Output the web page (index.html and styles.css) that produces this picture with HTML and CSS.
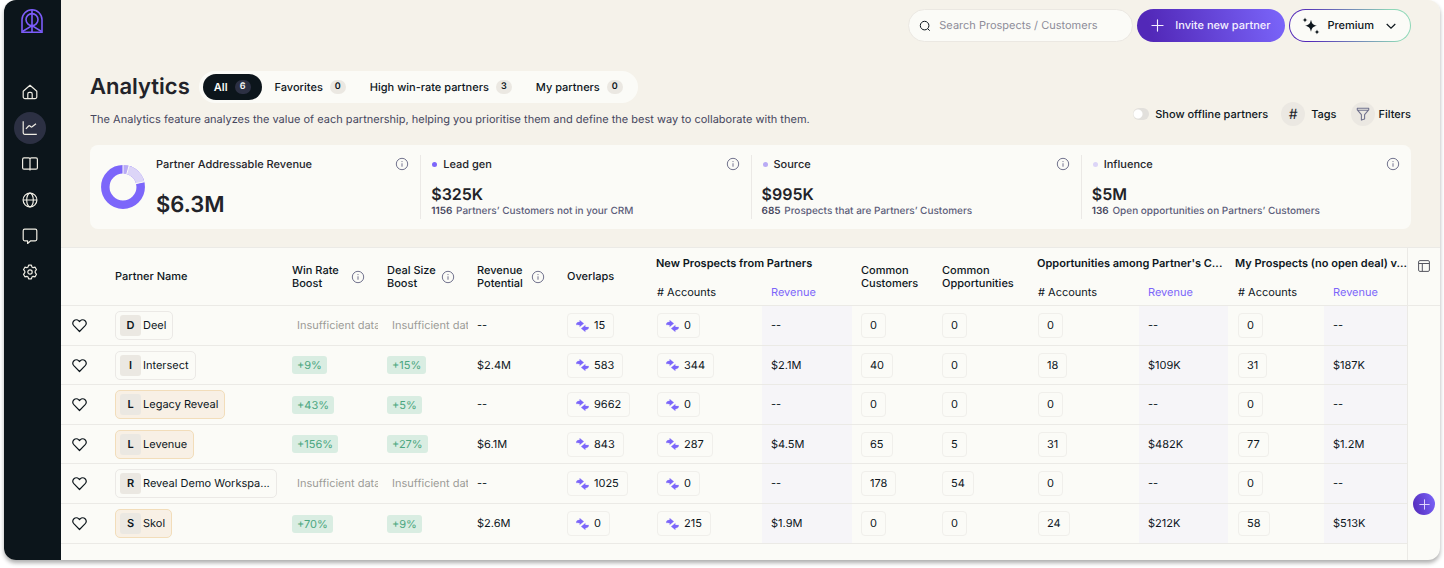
FILE: index.html
```html
<!DOCTYPE html>
<html lang="en">
<head>
<meta charset="utf-8">
<meta name="viewport" content="width=device-width, initial-scale=1">
<title>Analytics</title>
<link rel="stylesheet" href="styles.css">
</head>
<body>
<svg class="sprite" aria-hidden="true">
  <symbol id="i-info" viewBox="0 0 14 14"><circle cx="7" cy="7" r="5.7" fill="none" stroke="currentColor"/><path d="M7 6.3v3.4M7 4.1v1" stroke="currentColor" fill="none"/></symbol>
  <symbol id="i-heart" viewBox="0 0 14 14"><path d="M7 12.600 1.900 7.400C.6 6 .5 3.900 1.800 2.600 3.100 1.300 5.100 1.300 6.300 2.600L7 3.300l.7-.7c1.200-1.300 3.200-1.300 4.500 0 1.300 1.300 1.200 3.400-.1 4.800z" fill="none" stroke="currentColor" stroke-width="1.100" stroke-linejoin="round"/></symbol>
  <symbol id="i-swap" viewBox="0 0 14 12"><path d="M.3 4.800C.2 2.800 1.500 1.800 3.200 1.800H4V-.2L8.400 3.300 4 6.800V4.800H3C1.600 4.800.9 4.500.3 4.800zM13.700 7.200c.1 2-1.200 3-2.900 3H10v2L5.600 8.700 10 5.200v2H11c1.400 0 2.100.3 2.700 0z" fill="currentColor" stroke="currentColor" stroke-width=".3"/></symbol>
  <symbol id="i-plus" viewBox="0 0 14 14"><path d="M7 1v12M1 7h12" fill="none" stroke="currentColor" stroke-width="1.200" stroke-linecap="round"/></symbol>
</svg>
<div class="app">
  <aside class="sidebar">
    <a class="logo" href="#" aria-label="Home page">
      <svg width="22" height="24" viewBox="0 0 22 24" fill="none" stroke="currentColor" stroke-width="1.600"><path d="M1 23.200V10.800a10 10 0 0 1 20 0v12.400z"/><circle cx="11" cy="10.600" r="6"/><path d="M11 1v22M1.500 22.500 11 16.600l9.500 5.900"/></svg>
    </a>
    <nav class="nav" aria-label="Main">
      <a class="nav-item" href="#" aria-label="Home"><svg viewBox="0 0 16 16"><path d="M1.200 7.200 8 1.300l6.800 5.900v5.600a1.800 1.800 0 0 1-1.800 1.800H3a1.800 1.800 0 0 1-1.800-1.800zM5.800 14.400V9.900c0-.9.600-1.500 1.500-1.500h1.400c.9 0 1.500.6 1.500 1.500v4.500"/></svg></a>
      <a class="nav-item active" href="#" aria-label="Analytics"><svg viewBox="0 0 16 16"><path d="M1.200 1.200v11.600c0 .9.600 1.500 1.500 1.500h12.100M3.900 8.800 6.600 6c.5-.5.9-.5 1.400 0l.7.700c.5.500.9.500 1.400.1l3.900-3.100"/></svg></a>
      <a class="nav-item" href="#" aria-label="Library"><svg viewBox="0 0 16 16"><path d="M8 2.500v12M8 13.200H2A1.500 1.500 0 0 1 .6 11.700V3.400C.6 2.500 1.200 1.900 2 1.900h4.600c.8 0 1.400.5 1.400 1.200 0-.7.600-1.200 1.400-1.200H14c.8 0 1.400.6 1.400 1.500v8.300c0 .9-.6 1.500-1.400 1.500z"/></svg></a>
      <a class="nav-item" href="#" aria-label="Network"><svg viewBox="0 0 16 16"><circle cx="8" cy="8" r="6.900"/><ellipse cx="8" cy="8" rx="3.300" ry="6.900"/><path d="M1.100 8h13.800"/></svg></a>
      <a class="nav-item" href="#" aria-label="Messages"><svg viewBox="0 0 16 16"><path d="M2.700 1.200h10.600c.9 0 1.500.6 1.500 1.500v8.600c0 .9-.6 1.500-1.500 1.500H8.700l-3.100 2.700v-2.700H2.700c-.9 0-1.500-.6-1.500-1.500V2.700c0-.9.600-1.500 1.500-1.500z"/></svg></a>
      <a class="nav-item" href="#" aria-label="Settings"><svg viewBox="0 0 16 16"><path d="m6.600 1.100-.5 1.800-1.300.8-1.900-.5-1.400 2.500 1.300 1.400v1.600L1.500 10.300l1.400 2.500 1.900-.5 1.300.8.500 1.800h2.800l.5-1.800 1.300-.8 1.900.5 1.400-2.500-1.300-1.600V7.100l1.300-1.400-1.400-2.500-1.900.5-1.300-.8-.5-1.800z" stroke-linejoin="round"/><circle cx="8" cy="8" r="2.200"/></svg></a>
    </nav>
  </aside>

  <div class="page">
    <header class="hero">
      <div class="topbar">
        <label class="search">
          <svg width="12" height="12" viewBox="0 0 12 12" fill="none" stroke="currentColor"><circle cx="5.600" cy="5.600" r="4.300"/><path d="m8.700 8.700 2 2"/></svg>
          <input type="search" placeholder="Search Prospects / Customers" aria-label="Search Prospects / Customers">
        </label>
        <button class="invite" type="button"><svg width="13" height="13"><use href="#i-plus"/></svg>Invite new partner</button>
        <button class="premium" type="button">
          <svg width="18" height="18" viewBox="0 0 18 18" fill="currentColor"><path d="M9 2.800c.9 4 2 5.100 6 6-4 .9-5.100 2-6 6-.9-4-2-5.100-6-6 4-.9 5.100-2 6-6zM3 .4c.4 1.700.9 2.200 2.600 2.600C3.900 3.400 3.400 3.900 3 5.600 2.600 3.900 2.100 3.400.4 3 2.100 2.600 2.600 2.100 3 .4zM15 12.400c.4 1.700.9 2.200 2.600 2.600-1.700.4-2.200.9-2.600 2.600-.4-1.700-.9-2.200-2.600-2.600 1.700-.4 2.200-.9 2.600-2.600z"/></svg>
          Premium
          <svg class="chev" width="10" height="10" viewBox="0 0 10 10" fill="none" stroke="currentColor" stroke-width="1.200"><path d="M.7 3 5 7.200 9.300 3"/></svg>
        </button>
      </div>

      <div class="heading">
        <div class="heading-main">
          <div class="title-row">
            <h1>Analytics</h1>
            <div class="tabs">
              <button class="tab selected" type="button">All <span class="count">6</span></button>
              <button class="tab" type="button">Favorites <span class="count">0</span></button>
              <button class="tab" type="button">High win-rate partners <span class="count">3</span></button>
              <button class="tab" type="button">My partners <span class="count">0</span></button>
            </div>
          </div>
          <p class="lead">The Analytics feature analyzes the value of each partnership, helping you prioritise them and define the best way to collaborate with them.</p>
        </div>
        <div class="tools">
          <label class="switch"><input type="checkbox">Show offline partners</label>
          <button class="tool tool-tags" type="button"><span class="round">#</span>Tags</button>
          <button class="tool" type="button"><span class="round"><svg width="14" height="14" viewBox="0 0 14 14" fill="none" stroke="currentColor" stroke-width="1.100" stroke-linejoin="round"><path d="M1.300 1.300h11.400v1.600L8.600 7.700v4.400l-3.200 1V7.700L1.300 2.900zM1.700 3.300h10.600"/></svg></span>Filters</button>
        </div>
      </div>

      <section class="stats">
        <div class="stat total">
          <svg class="donut" width="44" height="44" viewBox="0 0 44 44" fill="none" stroke-width="8.500"><circle cx="22" cy="22" r="17.700" stroke="#7c66fa"/><path d="M22 4.300A17.700 17.700 0 0 1 39.300 17.800" stroke="#dcd5f7"/><path d="M22 4.300a17.700 17.700 0 0 1 5 .7" stroke="#b9abf5"/><path d="M22 0v9M28.300 0l-2.500 9M34.500 18.700l9.300-2" stroke="#fbfbf7" stroke-width="1"/></svg>
          <div class="stat-body">
            <div class="stat-head"><span>Partner Addressable Revenue</span><svg class="info"><use href="#i-info"/></svg></div>
            <div class="big">$6.3M</div>
          </div>
        </div>
        <div class="stat">
          <div class="stat-body">
            <div class="stat-head"><span class="dot dot-1"></span><span>Lead gen</span><svg class="info"><use href="#i-info"/></svg></div>
            <div class="value">$325K</div>
            <div class="note"><b>1156</b> Partners’ Customers not in your CRM</div>
          </div>
        </div>
        <div class="stat">
          <div class="stat-body">
            <div class="stat-head"><span class="dot dot-2"></span><span>Source</span><svg class="info"><use href="#i-info"/></svg></div>
            <div class="value">$995K</div>
            <div class="note"><b>685</b> Prospects that are Partners’ Customers</div>
          </div>
        </div>
        <div class="stat">
          <div class="stat-body">
            <div class="stat-head"><span class="dot dot-3"></span><span>Influence</span><svg class="info"><use href="#i-info"/></svg></div>
            <div class="value">$5M</div>
            <div class="note"><b>136</b> Open opportunities on Partners’ Customers</div>
          </div>
        </div>
      </section>
    </header>

    <main class="board">
      <div class="table-wrap">
        <table class="grid">
          <colgroup>
            <col class="c-heart"><col class="c-name"><col class="c-win"><col class="c-90"><col class="c-90"><col class="c-over">
            <col class="c-acc1"><col class="c-90"><col class="c-cust"><col class="c-opp"><col class="c-acc2"><col class="c-rev2"><col class="c-acc3"><col class="c-rev3">
          </colgroup>
          <thead>
            <tr>
              <th rowspan="2" aria-label="Favorite"></th>
              <th rowspan="2" class="name-cell">Partner Name</th>
              <th rowspan="2"><div class="th-info"><span>Win Rate<br>Boost</span><svg class="info"><use href="#i-info"/></svg></div></th>
              <th rowspan="2"><div class="th-info"><span>Deal Size<br>Boost</span><svg class="info"><use href="#i-info"/></svg></div></th>
              <th rowspan="2"><div class="th-info"><span>Revenue<br>Potential</span><svg class="info"><use href="#i-info"/></svg></div></th>
              <th rowspan="2">Overlaps</th>
              <th colspan="2" class="group">New Prospects from Partners</th>
              <th rowspan="2">Common<br>Customers</th>
              <th rowspan="2">Common<br>Opportunities</th>
              <th colspan="2" class="group">Opportunities among Partner's C...</th>
              <th colspan="2" class="group last">My Prospects (no open deal) v...</th>
            </tr>
            <tr>
              <th class="sub acc"># Accounts</th><th class="sub rev-head">Revenue</th>
              <th class="sub acc"># Accounts</th><th class="sub rev-head">Revenue</th>
              <th class="sub acc"># Accounts</th><th class="sub rev-head">Revenue</th>
            </tr>
          </thead>
          <tbody>
            <tr>
              <td class="fav"><button type="button" aria-label="Favorite Deel"><svg><use href="#i-heart"/></svg></button></td>
              <td class="name-cell"><a class="partner" href="#"><i>D</i>Deel</a></td>
              <td><span class="none">Insufficient data</span></td><td><span class="none">Insufficient data</span></td><td>--</td>
              <td><button class="box" type="button"><svg><use href="#i-swap"/></svg>15</button></td>
              <td class="acc"><button class="box" type="button"><svg><use href="#i-swap"/></svg>0</button></td><td class="rev">--</td>
              <td><button class="box" type="button">0</button></td><td><button class="box" type="button">0</button></td>
              <td class="acc"><button class="box" type="button">0</button></td><td class="rev">--</td>
              <td class="acc"><button class="box" type="button">0</button></td><td class="rev">--</td>
            </tr>
            <tr>
              <td class="fav"><button type="button" aria-label="Favorite Intersect"><svg><use href="#i-heart"/></svg></button></td>
              <td class="name-cell"><a class="partner" href="#"><i>I</i>Intersect</a></td>
              <td><span class="chip">+9%</span></td><td><span class="chip">+15%</span></td><td>$2.4M</td>
              <td><button class="box" type="button"><svg><use href="#i-swap"/></svg>583</button></td>
              <td class="acc"><button class="box" type="button"><svg><use href="#i-swap"/></svg>344</button></td><td class="rev">$2.1M</td>
              <td><button class="box" type="button">40</button></td><td><button class="box" type="button">0</button></td>
              <td class="acc"><button class="box" type="button">18</button></td><td class="rev">$109K</td>
              <td class="acc"><button class="box" type="button">31</button></td><td class="rev">$187K</td>
            </tr>
            <tr>
              <td class="fav"><button type="button" aria-label="Favorite Legacy Reveal"><svg><use href="#i-heart"/></svg></button></td>
              <td class="name-cell"><a class="partner warm" href="#"><i>L</i>Legacy Reveal</a></td>
              <td><span class="chip">+43%</span></td><td><span class="chip">+5%</span></td><td>--</td>
              <td><button class="box" type="button"><svg><use href="#i-swap"/></svg>9662</button></td>
              <td class="acc"><button class="box" type="button"><svg><use href="#i-swap"/></svg>0</button></td><td class="rev">--</td>
              <td><button class="box" type="button">0</button></td><td><button class="box" type="button">0</button></td>
              <td class="acc"><button class="box" type="button">0</button></td><td class="rev">--</td>
              <td class="acc"><button class="box" type="button">0</button></td><td class="rev">--</td>
            </tr>
            <tr>
              <td class="fav"><button type="button" aria-label="Favorite Levenue"><svg><use href="#i-heart"/></svg></button></td>
              <td class="name-cell"><a class="partner warm" href="#"><i>L</i>Levenue</a></td>
              <td><span class="chip">+156%</span></td><td><span class="chip">+27%</span></td><td>$6.1M</td>
              <td><button class="box" type="button"><svg><use href="#i-swap"/></svg>843</button></td>
              <td class="acc"><button class="box" type="button"><svg><use href="#i-swap"/></svg>287</button></td><td class="rev">$4.5M</td>
              <td><button class="box" type="button">65</button></td><td><button class="box" type="button">5</button></td>
              <td class="acc"><button class="box" type="button">31</button></td><td class="rev">$482K</td>
              <td class="acc"><button class="box" type="button">77</button></td><td class="rev">$1.2M</td>
            </tr>
            <tr>
              <td class="fav"><button type="button" aria-label="Favorite Reveal Demo Workspace"><svg><use href="#i-heart"/></svg></button></td>
              <td class="name-cell"><a class="partner" href="#"><i>R</i>Reveal Demo Workspa...</a></td>
              <td><span class="none">Insufficient data</span></td><td><span class="none">Insufficient data</span></td><td>--</td>
              <td><button class="box" type="button"><svg><use href="#i-swap"/></svg>1025</button></td>
              <td class="acc"><button class="box" type="button"><svg><use href="#i-swap"/></svg>0</button></td><td class="rev">--</td>
              <td><button class="box" type="button">178</button></td><td><button class="box" type="button">54</button></td>
              <td class="acc"><button class="box" type="button">0</button></td><td class="rev">--</td>
              <td class="acc"><button class="box" type="button">0</button></td><td class="rev">--</td>
            </tr>
            <tr>
              <td class="fav"><button type="button" aria-label="Favorite Skol"><svg><use href="#i-heart"/></svg></button></td>
              <td class="name-cell"><a class="partner warm" href="#"><i>S</i>Skol</a></td>
              <td><span class="chip">+70%</span></td><td><span class="chip">+9%</span></td><td>$2.6M</td>
              <td><button class="box" type="button"><svg><use href="#i-swap"/></svg>0</button></td>
              <td class="acc"><button class="box" type="button"><svg><use href="#i-swap"/></svg>215</button></td><td class="rev">$1.9M</td>
              <td><button class="box" type="button">0</button></td><td><button class="box" type="button">0</button></td>
              <td class="acc"><button class="box" type="button">24</button></td><td class="rev">$212K</td>
              <td class="acc"><button class="box" type="button">58</button></td><td class="rev">$513K</td>
            </tr>
          </tbody>
        </table>
      </div>
      <div class="rail">
        <div class="rail-head"><button class="columns" type="button" aria-label="Edit columns"><svg width="12" height="12" viewBox="0 0 12 12" fill="none" stroke="currentColor"><rect x=".6" y=".6" width="10.800" height="10.800" rx="1.300"/><path d="M.6 3.500h10.800M4.300 3.500v7.900"/></svg></button></div>
        <button class="add" type="button" aria-label="Add"><svg width="11" height="11"><use href="#i-plus" width="11" height="11"/></svg></button>
      </div>
    </main>
  </div>
</div>
</body>
</html>
```
FILE: styles.css
```css
* { box-sizing: border-box; }
body {
  margin: 0;
  background: #fff;
  color: #0d161c;
  font: 400 11px/13px Inter, "Liberation Sans", sans-serif;
  text-rendering: geometricPrecision;
}
button, input { font: inherit; color: inherit; margin: 0; text-rendering: inherit; }
button { border: 0; padding: 0; background: none; cursor: pointer; white-space: nowrap; }
a { color: inherit; text-decoration: none; }
svg { display: block; flex: none; }
.sprite { position: absolute; width: 0; height: 0; }

.app {
  display: flex;
  min-height: calc(100vh - 8px);
  margin: 0 4px 8px;
  border-radius: 12px;
  overflow: hidden;
  background: #fbfbf7;
  box-shadow: 0 3px 4px rgba(0, 0, 0, .32);
}

.sidebar { flex: none; width: 57px; background: #0c151b; }
.logo { display: block; padding: 9px 0 0 17px; color: #7c5cfa; }
.nav { display: flex; flex-direction: column; gap: 4px; padding: 43px 0 0 10px; }
.nav-item {
  display: grid;
  place-items: center;
  width: 32px;
  height: 32px;
  border-radius: 50%;
  color: #f0ede4;
}
.nav-item svg { width: 16px; height: 16px; fill: none; stroke: currentColor; stroke-width: 1.2; stroke-linejoin: round; }
.nav-item.active { background: #2c3043; }

.page { flex: 1; min-width: 0; display: flex; flex-direction: column; }
.hero { background: #f5f2ea; padding: 9px 29px 18px; border-bottom: 1px solid #ebeae6; }

.topbar { display: flex; justify-content: flex-end; gap: 4px; }
.topbar > * { height: 33px; border-radius: 17px; display: flex; align-items: center; }
.search { width: 225px; padding: 0 10px; gap: 8px; background: #fbfbf7; border: 1px solid #ebe8e2; }
.search input { flex: 1; min-width: 0; border: 0; padding: 0; background: none; outline: 0; }
.search input::placeholder { color: #8d8c99; opacity: 1; }
.invite {
  gap: 11px;
  padding: 0 14px;
  color: #f5f0ff;
  font-weight: 500;
  background: linear-gradient(75deg, #5228b8 10%, #7b66fb);
}
.premium {
  gap: 8px;
  padding: 0 14px 0 12px;
  font-weight: 500;
  border: 1px solid transparent;
  background: linear-gradient(#fbfbf7, #fbfbf7) padding-box, linear-gradient(75deg, #5228b8 15%, #8ed8b8 85%) border-box;
}
.chev { margin-left: 4px; }

.heading { display: flex; justify-content: space-between; align-items: flex-end; padding-top: 29px; }
.title-row { display: flex; align-items: center; gap: 9px; }
h1 { margin: 0; font-size: 22px; line-height: 28px; font-weight: 600; color: #222329; }
.tabs { display: flex; gap: 2px; padding: 3px 4px; border-radius: 16px; background: #fbfbf7; }
.tab { display: flex; align-items: center; gap: 7px; height: 26px; padding: 0 11px; border-radius: 13px; font-weight: 500; }
.count { min-width: 16px; height: 14px; padding: 0 5px; border-radius: 7px; background: #ebe8e2; font-size: 9px; line-height: 14px; font-weight: 600; }
.selected { color: #fbfbf7; background: #0c151b; font-weight: 600; }
.selected .count { background: #2c3043; }
.lead { margin: 9px 0 0; color: #45465d; line-height: 14px; }

.tools { display: flex; align-items: center; font-weight: 500; }
.switch { display: flex; align-items: center; gap: 6px; margin-right: 13px; }
.switch input {
  appearance: none;
  width: 16px;
  height: 12px;
  border-radius: 6px;
  background: radial-gradient(circle at 5px 6px, #fff 4px, transparent 5px), #e2e0dc;
}
.tool { display: flex; align-items: center; gap: 4px; font-weight: 500; }
.tool-tags { gap: 6px; margin-right: 14px; }
.round { display: grid; place-items: center; width: 24px; height: 24px; border-radius: 50%; background: #ebe8e2; font-size: 14px; font-weight: 400; color: #222329; }
.round svg { color: #72738e; }

.stats { display: grid; grid-template-columns: repeat(4, 1fr); margin-top: 19px; padding: 10px 0; border-radius: 8px; background: #fbfbf7; }
.stat { display: flex; min-width: 0; height: 64px; padding: 2px 11px 0 10px; border-left: 1px solid #ebe9e6; }
.stat.total { border-left-color: transparent; gap: 11px; }
.donut { margin-top: 8px; }
.stat-body { flex: 1; min-width: 0; }
.stat-head { display: flex; align-items: center; font-weight: 500; color: #222329; }
.stat-head .info { margin-left: auto; }
.info { width: 14px; height: 14px; color: #72738e; }
.dot { width: 5px; height: 5px; margin: 0 6px 0 1px; border-radius: 50%; }
.dot-1 { background: #7c66fa; }
.dot-2 { background: #b9abf5; }
.dot-3 { background: #dcd5f7; }
.big { margin-top: 20px; font-size: 22px; line-height: 28px; font-weight: 600; color: #222329; }
.value { margin-top: 12px; font-size: 16px; line-height: 22px; font-weight: 600; color: #222329; }
.note { color: #5c5d7a; font-size: 10px; font-weight: 500; white-space: nowrap; }
.note b { font-weight: 600; color: #45465d; margin-right: 1px; }

.board { flex: 1; display: flex; }
.table-wrap { flex: 1; min-width: 0; }
.grid { width: 100%; table-layout: fixed; border-collapse: separate; border-spacing: 0; }
.c-heart { width: 45px; }
.c-name { width: 177px; }
.c-win { width: 95px; }
.c-90 { width: 90px; }
.c-over { width: 89px; }
.c-acc1 { width: 115px; }
.c-cust { width: 81px; }
.c-opp { width: 95px; }
.c-acc2 { width: 111px; }
.c-rev2 { width: 89px; }
.c-acc3 { width: 96px; }
.c-rev3 { width: 83px; }
.grid th, .grid td { padding: 0 0 0 9px; text-align: left; vertical-align: middle; white-space: nowrap; overflow: hidden; border-bottom: 1px solid #ebeae6; }
.grid th { height: 29px; font-weight: 500; }
.grid th.group { font-weight: 600; padding-top: 1px; border-bottom: 0; }
.grid th.last { padding-left: 7px; }
.grid th.sub { font-weight: 400; padding-top: 2px; }
.grid th.rev-head { color: #7c66fa; }
.grid .acc { padding-left: 10px; }
.grid .fav { padding-left: 11px; }
.grid tbody td { height: 40px; }
.grid tbody tr:nth-child(2) td, .grid tbody tr:nth-child(4) td { height: 39px; }
.grid tbody .rev { background: #f6f5f8; }
.th-info { display: flex; align-items: center; justify-content: space-between; padding-right: 13px; }

.fav button, .fav svg { display: block; width: 15px; height: 15px; }
.partner { display: inline-flex; align-items: center; gap: 2px; height: 29px; padding: 0 6px 0 4px; border: 1px solid #ebe9e6; border-radius: 5px; vertical-align: middle; }
.partner i { width: 21px; height: 21px; border-radius: 3px; background: #ebe8e2; font-style: normal; font-weight: 600; line-height: 21px; text-align: center; }
.warm { background: #f8f0e5; border-color: #f2ddba; }
.none { padding-left: 5px; color: #9c9c98; }
.chip { display: inline-block; padding: 0 5px; border-radius: 3px; line-height: 18px; background: #d9ede2; color: #4ba680; vertical-align: middle; }
.box { display: inline-flex; align-items: center; gap: 5px; height: 25px; padding: 0 8px; border: 1px solid #f0efeb; border-radius: 4px; vertical-align: middle; }
.box svg { width: 13px; height: 12px; color: #7c66fa; overflow: visible; }

.rail { flex: none; display: flex; flex-direction: column; align-items: center; width: 33px; border-left: 1px solid #ebeae6; padding-bottom: 45px; }
.rail-head { width: 100%; height: 58px; display: grid; justify-items: center; align-content: start; padding-top: 12px; border-bottom: 1px solid #ebeae6; color: #55565f; }
.add { display: grid; place-items: center; width: 22px; height: 22px; margin-top: auto; border-radius: 50%; color: #e6dcff; background: linear-gradient(75deg, #5228b8, #7b66fb); }
```
